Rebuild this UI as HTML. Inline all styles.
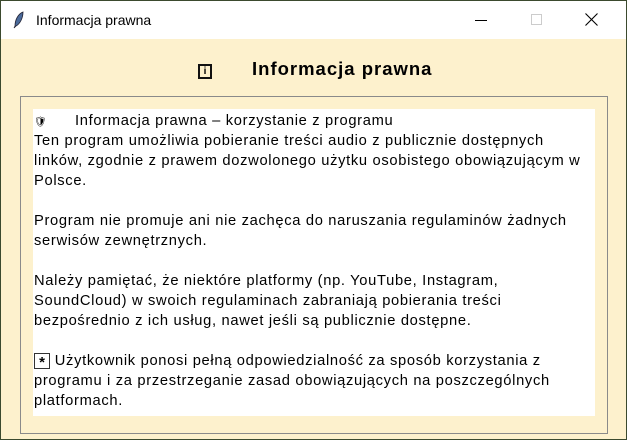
<!DOCTYPE html>
<html><head><meta charset="utf-8"><style>
*{margin:0;padding:0;box-sizing:border-box}
body{width:627px;height:440px;overflow:hidden;background:#3b4a2e;font-family:"Liberation Sans",Arial,sans-serif;position:relative}
.win{position:absolute;left:1px;top:1px;width:625px;height:438px;background:#fdf1cd}
.tb{position:absolute;left:0;top:0;width:625px;height:38px;background:#fff}
.tt{position:absolute;left:35px;top:11px;font-size:14px;color:#000}
.hd{position:absolute;left:251px;top:57px;font-size:18.5px;font-weight:bold;color:#000;letter-spacing:1px}
.ib{position:absolute;left:197px;top:63px;width:14px;height:15px;border:2px solid #111;font-size:10px;font-weight:bold;text-align:center;line-height:11px}
.fr{position:absolute;left:19px;top:95px;width:588px;height:338px;border:1px solid #8a8a8a}
.wa{position:absolute;left:32px;top:108px;width:562px;height:307px;background:#fff}
.l{position:absolute;left:34px;font-size:14.7px;color:#000;white-space:nowrap;letter-spacing:0.68px}
</style></head><body>
<div class="win">
<div class="tb">
<svg style="position:absolute;left:12px;top:10px" width="12" height="18" viewBox="0 0 12 18"><path d="M10 1 C5 3 2 9 2 15 L1 17 L3 15 C7 13 10 7 10 1Z" fill="#4a6a9a" stroke="#223" stroke-width="0.8"/></svg>
<div class="tt">Informacja prawna</div>
<div style="position:absolute;left:474px;top:19px;width:12px;height:1px;background:#000"></div>
<div style="position:absolute;left:530px;top:13px;width:11px;height:11px;border:1px solid #ccc"></div>
<svg style="position:absolute;left:584px;top:12px" width="13" height="13" viewBox="0 0 13 13"><path d="M0.5 0.5L12.5 12.5M12.5 0.5L0.5 12.5" stroke="#000" stroke-width="1.1"/></svg>
</div>
<div class="ib">i</div>
<div class="hd">Informacja prawna</div>
<div class="fr"></div>
<div class="wa"></div>
</div>
<div class="l" style="top:113px"><span style="font-size:10px">🛡</span><span style="position:absolute;left:41px">Informacja prawna – korzystanie z programu</span></div>
<div class="l" style="top:133px">Ten program umożliwia pobieranie treści audio z publicznie dostępnych</div>
<div class="l" style="top:153px">linków, zgodnie z prawem dozwolonego użytku osobistego obowiązującym w</div>
<div class="l" style="top:173px">Polsce.</div>
<div class="l" style="top:213px">Program nie promuje ani nie zachęca do naruszania regulaminów żadnych</div>
<div class="l" style="top:233px">serwisów zewnętrznych.</div>
<div class="l" style="top:273px">Należy pamiętać, że niektóre platformy (np. YouTube, Instagram,</div>
<div class="l" style="top:293px">SoundCloud) w swoich regulaminach zabraniają pobierania treści</div>
<div class="l" style="top:313px">bezpośrednio z ich usług, nawet jeśli są publicznie dostępne.</div>
<div class="l" style="top:353px"><span style="display:inline-block;width:16px;height:16px;border:1px solid #333;font-size:15px;font-weight:bold;line-height:17px;text-align:center;vertical-align:-2px;letter-spacing:0">*</span> Użytkownik ponosi pełną odpowiedzialność za sposób korzystania z</div>
<div class="l" style="top:373px">programu i za przestrzeganie zasad obowiązujących na poszczególnych</div>
<div class="l" style="top:393px">platformach.</div>
</body></html>
